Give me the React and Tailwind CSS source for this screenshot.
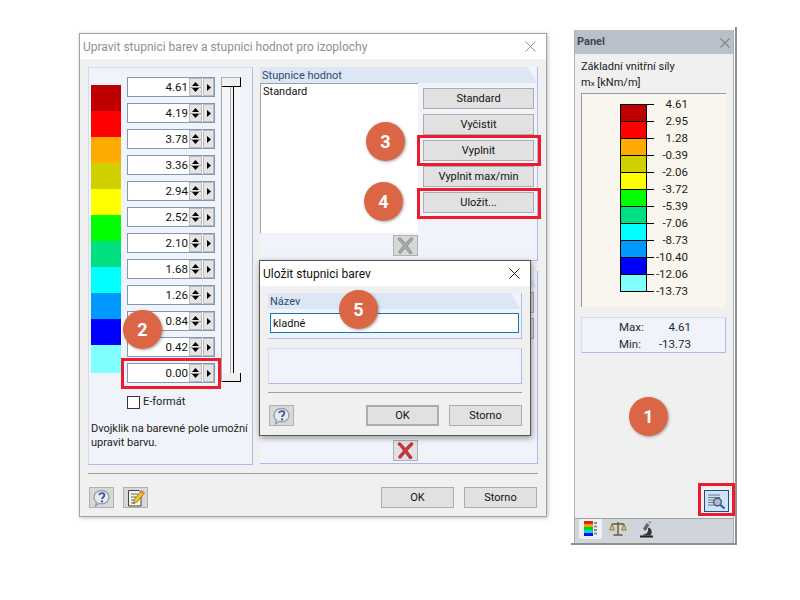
import React from "react";

const scaleValues = ["4.61","4.19","3.78","3.36","2.94","2.52","2.10","1.68","1.26","0.84","0.42","0.00"];
const dialogColors = [
  ["bg-[#bf0000]","h-[26px]"],["bg-[#ff0000]","h-[26px]"],["bg-[#ffaa00]","h-[26px]"],["bg-[#d0d000]","h-[26px]"],
  ["bg-[#ffff00]","h-[26px]"],["bg-[#00ff00]","h-[26px]"],["bg-[#00e080]","h-[26px]"],["bg-[#00ffff]","h-[26px]"],
  ["bg-[#0099ff]","h-[26px]"],["bg-[#0000ff]","h-[26px]"],["bg-[#80ffff]","h-[28px]"],
];
const legend = [
  ["4.61","bg-[#bf0000]"],["2.95","bg-[#ff0000]"],["1.28","bg-[#ffaa00]"],["-0.39","bg-[#d0d000]"],
  ["-2.06","bg-[#ffff00]"],["-3.72","bg-[#00ff00]"],["-5.39","bg-[#00e080]"],["-7.06","bg-[#00ffff]"],
  ["-8.73","bg-[#0099ff]"],["-10.40","bg-[#0000ff]"],["-12.06","bg-[#80ffff]"],["-13.73",""],
];

function Btn({ children, className = "" }) {
  return <div className={"flex items-center justify-center pt-[1px] bg-[#e1e1e1] border border-[#adadad] text-[#111] " + className}>{children}</div>;
}

function IconBtn({ children, className = "" }) {
  return <div className={"flex items-center justify-center w-[25px] h-[21px] bg-[#d8d8d8] border border-[#b0b0b0] " + className}>{children}</div>;
}

function HelpIcon() {
  return (
    <svg width="19" height="18" viewBox="0 0 19 18">
      <path d="M9.500 1.500c4.400 0 7.500 2.900 7.500 6.700s-3.100 6.600-7.500 6.600c-.9 0-1.700-.1-2.400-.4L3.500 16.800l1-3.400C3 12.200 2 10.400 2 8.200 2 4.400 5.100 1.500 9.500 1.500z" fill="#e6e9ee" stroke="#98a0ac" strokeWidth="1.400" />
      <path d="M7 6.100c.4-1.300 1.400-2 2.700-2 1.600 0 2.700.9 2.700 2.200 0 1.900-2.400 2-2.400 3.800" fill="none" stroke="#3d4f98" strokeWidth="1.700" />
      <circle cx="10" cy="12.400" r="1.100" fill="#3d4f98" />
    </svg>
  );
}

function EditIcon() {
  return (
    <svg width="20" height="20" viewBox="0 0 20 20">
      <path d="M2.500 2.500h10.500l2 2v13.500H2.500z" fill="#f4f4ee" stroke="#444" strokeWidth="1" />
      <path d="M5 6h7M5 9h5M5 12h4M5 15h4" stroke="#666" strokeWidth="1" />
      <path d="M15.500 2.500l3 2.500-7.500 9-3.500 1.500.5-3.500z" fill="#f5c518" stroke="#7a5a00" strokeWidth=".7" />
      <path d="M15.500 2.500l3 2.500-1.200 1.400-3-2.500z" fill="#e8778a" />
    </svg>
  );
}

function XIcon({ color, dark }) {
  return (
    <svg width="17" height="17" viewBox="0 0 17 17">
      <path d="M2.500 2C6 5 10 11 13.500 15.500M14.500 2C11 5.500 6.500 10.500 3 15" fill="none" stroke={dark} strokeWidth="3.400" strokeLinecap="round" />
      <path d="M2.500 2C6 5 10 11 13.500 15.500M14.500 2C11 5.500 6.500 10.500 3 15" fill="none" stroke={color} strokeWidth="2" strokeLinecap="round" />
    </svg>
  );
}

function Tri({ up }) {
  return (
    <svg width="7" height="4" viewBox="0 0 7 4" className="block">
      <path d={up ? "M3.500 0L7 4H0z" : "M0 0h7L3.500 4z"} fill="#000" />
    </svg>
  );
}

function SpinRow({ value }) {
  return (
    <div className="flex items-center h-[20px] w-[88px] border border-[#8098b5] bg-white">
      <span className="flex-1 text-right leading-[18px] text-[11.500px] text-[#111]">{value}</span>
      <div className="w-[13px] h-[18px] ml-[1px] flex flex-col items-center justify-between py-[3px] bg-[#e4e4e4] border border-[#bcbcbc]">
        <Tri up />
        <div className="w-[11px] h-px bg-[#a0a0a0]" />
        <Tri />
      </div>
      <div className="w-[11px] h-[18px] ml-[1px] flex items-center justify-center bg-[#e4e4e4] border border-[#bcbcbc]">
        <svg width="4" height="7" viewBox="0 0 4 7"><path d="M0 0l4 3.500L0 7z" fill="#000" /></svg>
      </div>
    </div>
  );
}

function GroupHeader({ children }) {
  return (
    <div className="h-[16px] shrink-0 bg-[#dce6f4] text-[#2f4a6b] leading-[17px] pl-[2px] [clip-path:polygon(0_0,calc(100%-10px)_0,100%_100%,0_100%)]">
      {children}
    </div>
  );
}

function Badge({ n, className }) {
  return (
    <div className={"absolute w-[39px] h-[39px] rounded-full bg-[#db6646] text-white font-bold text-[18px] flex items-center justify-center shadow-[1px_1px_3px_rgba(0,0,0,0.35)] " + className}>
      {n}
    </div>
  );
}

function RedBox({ className }) {
  return <div className={"absolute border-[3px] border-[#ec1c2e] " + className} />;
}

export default function App() {
  return (
    <div className="relative w-[800px] h-[600px] overflow-hidden bg-white text-[11px] font-['Roboto','Liberation_Sans',sans-serif]">
      {/* main dialog */}
      <div className="absolute left-[79px] top-[33px] w-[468px] h-[484px] flex flex-col bg-[#f0f0f0] border border-[#a3a3a3] shadow-[1px_1px_4px_rgba(0,0,0,0.25)]">
        <div className="h-[25px] shrink-0 bg-white flex items-center justify-between pl-[3px] pr-[10px] text-[#8c9198] text-[12px]">
          <span>Upravit stupnici barev a stupnici hodnot pro izoplochy</span>
          <svg width="11" height="11" viewBox="0 0 11 11"><path d="M.5.5l10 10M10.500.5l-10 10" stroke="#8c9198" /></svg>
        </div>
        <div className="flex pl-[8px] pt-[8px] gap-[7px]">
          {/* left group */}
          <div className="w-[165px] h-[398px] shrink-0 bg-[#f0f3f9] border border-[#cfdcf2] border-r-[#b4b4ee] border-b-[#b4b4ee]">
            <div className="flex pt-[9px] pl-[2px]">
              <div className="w-[30px] mt-[8px] flex flex-col">
                {dialogColors.map(([c, h], i) => <div key={i} className={c + " " + h} />)}
              </div>
              <div className="ml-[6px] flex flex-col gap-[6px]">
                {scaleValues.map((v) => <SpinRow key={v} value={v} />)}
              </div>
              <div className="ml-[6px] w-[20px] h-[305px] border-l border-[#a9a9a9] bg-[#f5f6f9] flex flex-col justify-between">
                <div className="h-[10px] bg-[#f0f0f0] border-t border-[#b0b0b0] border-b border-r border-b-black border-r-black" />
                <div className="flex-1 mx-auto w-[4px] border-l border-r border-l-[#a9a9a9] border-r-black" />
                <div className="h-[9px] bg-[#f0f0f0] border-b border-r border-black" />
              </div>
            </div>
            <div className="flex items-center ml-[38px] mt-[12px] h-[14px]">
              <div className="w-[13px] h-[13px] bg-white border border-[#333]" />
              <span className="ml-[3px] pt-[1px] text-[#222]">E-formát</span>
            </div>
            <div className="ml-[2px] mt-[13px] leading-[14px] text-[#222] whitespace-nowrap">
              Dvojklik na barevné pole umožní<br />upravit barvu.
            </div>
          </div>

          {/* right column */}
          <div className="w-[278px] flex flex-col">
            <div className="h-[194px] flex flex-col bg-[#f0f3f9] border-r border-b border-[#b4b4ee]">
              <GroupHeader>Stupnice hodnot</GroupHeader>
              <div className="flex">
                <div className="w-[158px] h-[150px] bg-white border-t border-l border-[#a0a0a0] pl-[2px] pt-[1px] text-[#111] leading-[14px]">Standard</div>
                <div className="ml-[5px] pt-[5px] flex flex-col gap-[5px]">
                  <Btn className="w-[111px] h-[21px]">Standard</Btn>
                  <Btn className="w-[111px] h-[21px]">Vyčistit</Btn>
                  <Btn className="w-[111px] h-[21px]">Vyplnit</Btn>
                  <Btn className="w-[111px] h-[21px]">Vyplnit max/min</Btn>
                  <Btn className="w-[111px] h-[21px]">Uložit...</Btn>
                </div>
              </div>
              <div className="pl-[133px] pt-[2px]">
                <IconBtn className="bg-[#d4d4d4]">
                  <XIcon color="#a6aea8" dark="#868c88" />
                </IconBtn>
              </div>
            </div>
            <div className="h-[193px] mt-[10px] flex flex-col bg-[#f0f3f9] border-r border-b border-[#b4b4ee]">
              <GroupHeader />
              <div className="flex h-[150px]">
                <div className="w-[158px] bg-white" />
                <div className="ml-[5px] pt-[5px] flex flex-col gap-[5px]">
                  <Btn className="w-[111px] h-[21px]" />
                  <Btn className="w-[111px] h-[21px]" />
                </div>
              </div>
              <div className="pl-[133px] pt-[3px]">
                <IconBtn className="bg-[#e1e1e1]">
                  <XIcon color="#e0303a" dark="#8a3a40" />
                </IconBtn>
              </div>
            </div>
          </div>
        </div>
        <div className="mx-[8px] mt-[8px] h-px bg-[#a0a0a0]" />
        <div className="flex items-center px-[9px] mt-[13px]">
          <IconBtn><HelpIcon /></IconBtn>
          <IconBtn className="ml-[9px]"><EditIcon /></IconBtn>
          <Btn className="w-[73px] h-[21px] ml-auto">OK</Btn>
          <Btn className="w-[73px] h-[21px] ml-[10px]">Storno</Btn>
        </div>
      </div>

      {/* save dialog */}
      <div className="absolute left-[259px] top-[260px] w-[272px] h-[176px] flex flex-col bg-[#f0f0f0] border border-[#555] shadow-[1px_2px_6px_rgba(0,0,0,0.4)]">
        <div className="h-[25px] shrink-0 bg-white flex items-center justify-between pl-[3px] pr-[10px] text-[12px] text-[#111]">
          <span>Uložit stupnici barev</span>
          <svg width="11" height="11" viewBox="0 0 11 11"><path d="M.5.5l10 10M10.500.5l-10 10" stroke="#222" /></svg>
        </div>
        <div className="mx-[8px] mt-[7px] bg-[#f0f3f9] border-r border-b border-[#b4b4ee] h-[46px]">
          <GroupHeader>Název</GroupHeader>
          <div className="mt-[4px] mx-[2px] h-[20px] bg-white border border-[#0b78d0] pl-[2px] leading-[19px] text-[#111]">kladné</div>
        </div>
        <div className="mx-[8px] mt-[9px] h-[36px] bg-[#f0f3f9] border border-[#d3dff3] border-r-[#b4b4ee] border-b-[#b4b4ee]" />
        <div className="mx-[8px] mt-[8px] h-px bg-[#a0a0a0]" />
        <div className="flex items-center pl-[9px] pr-[8px] mt-[12px]">
          <IconBtn><HelpIcon /></IconBtn>
          <Btn className="w-[73px] h-[21px] ml-auto border-2 border-[#0b78d0]">OK</Btn>
          <Btn className="w-[73px] h-[21px] ml-[10px]">Storno</Btn>
        </div>
      </div>

      {/* side panel */}
      <div className="absolute left-[571px] top-[27px] w-[166px] h-[518px] bg-white border-r-2 border-b-2 border-[#8f8f8f] pl-[3px] pt-[3px]">
        <div className="w-[160px] h-[513px] flex flex-col border-l border-[#a9b0ba] border-r border-r-[#a9b0ba]">
          <div className="h-[24px] shrink-0 bg-[#b9c0c9] flex items-center justify-between pl-[2px] pr-[3px] pt-[1px] font-bold text-[#3f4852]">
            <span>Panel</span>
            <svg width="10" height="10" viewBox="0 0 10 10"><path d="M.5.500l9 9M9.500.500l-9 9" stroke="#808890" strokeWidth="1.200" /></svg>
          </div>
          <div className="flex-1 flex flex-col bg-[#f0f0f0] pl-[6px] pr-[7px] pt-[6px] text-[#1a1a1a] border-b border-[#a0a0a0]">
            <div className="leading-[14px]">Základní vnitřní síly</div>
            <div className="leading-[14px] mt-[2px]">m<span className="text-[8px]">x</span> [kNm/m]</div>
            <div className="mt-[2px] h-[214px] shrink-0 bg-[#f9f6ef] border-t border-l border-[#9b9b9b] pt-[10px] pl-[38px]">
              {legend.map(([label, color], i) => (
                <div key={label} className="flex h-[17px] items-start">
                  {i < 11
                    ? <div className={"w-[27px] h-[18px] border border-black " + color} />
                    : <div className="w-[27px] h-px" />}
                  <div className="w-[7px] h-px bg-black" />
                  <div className="w-[34px] -mt-[7px] text-right leading-[14px] text-[11.500px] text-[#1a1a1a]">{label}</div>
                </div>
              ))}
            </div>
            <div className="mt-[10px] h-[36px] shrink-0 bg-[#f0f3f9] border border-[#d3dff3] border-r-[#b4b4ee] border-b-[#b4b4ee] pt-[1px] text-[#1a2a40] text-[11.500px]">
              {[["Max:","4.61"],["Min:","-13.73"]].map(([k, v]) => (
                <div key={k} className="flex h-[17px] items-center pl-[37px]">
                  <span className="w-[35px]">{k}</span>
                  <span className="w-[37px] text-right">{v}</span>
                </div>
              ))}
            </div>
            <div className="mt-auto mb-[6px] ml-auto mr-[-3px] w-[25px] h-[22px] shrink-0 bg-[#cfe3f5] border border-[#1c4f80] flex items-center justify-center">
              <svg width="19" height="17" viewBox="0 0 19 17">
                <path d="M1 2h12M1 4.500h12M1 7h7M1 9.500h6M1 12h7" stroke="#6b7a88" strokeWidth="1" />
                <circle cx="10.500" cy="9" r="3.800" fill="#b4bcc8" stroke="#3d5f90" strokeWidth="1.400" />
                <path d="M13.500 12l4 3.500" stroke="#2a5ea8" strokeWidth="2.200" />
              </svg>
            </div>
          </div>
          <div className="h-[24px] shrink-0 bg-[#d0d5dc] flex items-start pl-[4px]">
            <div className="w-[23px] h-[20px] bg-[#f0f0f0] rounded-b-[3px] flex items-center justify-center">
              <svg width="15" height="16" viewBox="0 0 15 16">
                <rect x="1" y="0" width="9" height="3" fill="#e0201c" />
                <rect x="1" y="3" width="9" height="3" fill="#f2a000" />
                <rect x="1" y="6" width="9" height="3" fill="#00d020" />
                <rect x="1" y="9" width="9" height="3" fill="#00d8e0" />
                <rect x="1" y="12" width="9" height="3" fill="#1010e0" />
                <path d="M11 1h3v2h-3zM11 4.500h3v2h-3zM11 8h3v2h-3zM11 11.500h3v2h-3z" fill="#8a8f96" />
              </svg>
            </div>
            <svg className="ml-[7px] mt-[2px]" width="18" height="16" viewBox="0 0 18 16">
              <path d="M9 1v12M3 3h12M4.500 14h9" stroke="#6b5a20" strokeWidth="1.400" />
              <path d="M3 3L.8 9h4.400zM15 3l-2.200 6h4.400z" fill="#e8cc70" stroke="#7a6420" strokeWidth=".8" />
            </svg>
            <svg className="ml-[11px] mt-[1px]" width="17" height="18" viewBox="0 0 17 18">
              <path d="M2 15.500h13v2H2z" fill="#222" />
              <path d="M8.500 3l3 2-4 6-2.500-2z" fill="#666" />
              <path d="M11.500 .8l2 1.300-1.200 1.800-2-1.300z" fill="#999" />
              <path d="M11 7.500c3 1.500 3.500 5 1.500 8H5c-1-1 2-1 3.500-2 1.500-1.500 2-3.500 1.500-5z" fill="#333" />
            </svg>
          </div>
        </div>
      </div>

      {/* annotations */}
      <RedBox className="left-[121px] top-[358px] w-[100px] h-[31px]" />
      <RedBox className="left-[417px] top-[135px] w-[124px] h-[31px]" />
      <RedBox className="left-[417px] top-[188px] w-[124px] h-[31px]" />
      <RedBox className="left-[698px] top-[483px] w-[37px] h-[33px]" />
      <Badge n="1" className="left-[629px] top-[397px]" />
      <Badge n="2" className="left-[123px] top-[310px]" />
      <Badge n="3" className="left-[366px] top-[122px]" />
      <Badge n="4" className="left-[364px] top-[182px]" />
      <Badge n="5" className="left-[339px] top-[290px]" />
    </div>
  );
}
